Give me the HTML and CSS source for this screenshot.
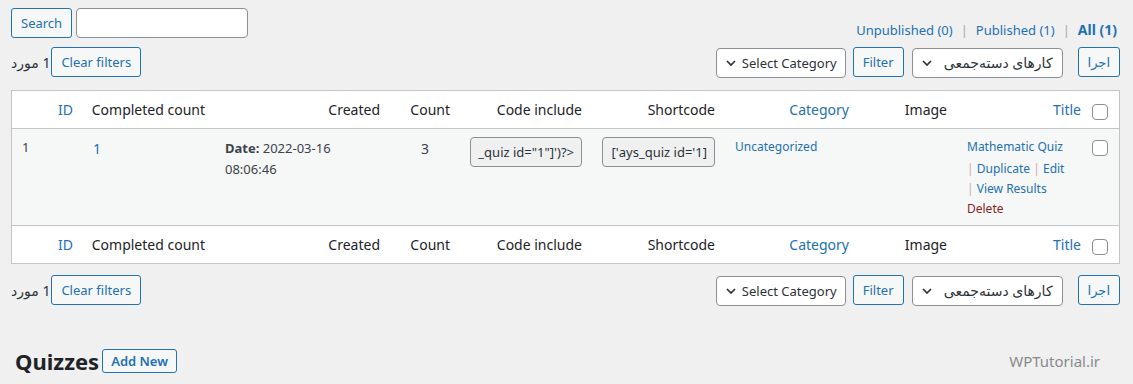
FILE: index.html
```
<!DOCTYPE html>
<html lang="fa" dir="rtl">
<head>
    <meta charset="UTF-8">
    <meta name="viewport" content="width=device-width, initial-scale=1.0">
    <title>Quizzes</title>
    <link rel="stylesheet" href="styles.css">
</head>
<body>

    <div class="wrap">
        <!-- Status links + search -->
        <div class="top-row">
            <ul class="subsubsub">
                <li><a href="#" class="current" dir="ltr">All (1)</a><span class="sep">|</span></li>
                <li><a href="#" dir="ltr">Published (1)</a><span class="sep">|</span></li>
                <li><a href="#" dir="ltr">Unpublished (0)</a></li>
            </ul>
            <div class="search-box">
                <input type="search" class="search-input">
                <button class="button">Search</button>
            </div>
        </div>

        <!-- Top table navigation -->
        <div class="tablenav">
            <div class="actions">
                <button class="button">اجرا</button>
                <div class="select select-bulk">
                    <span>کارهای دسته‌جمعی</span>
                    <svg class="chev" width="10" height="6" viewBox="0 0 10 6"><polyline points="1,1 5,5 9,1"/></svg>
                </div>
                <button class="button button-filter">Filter</button>
                <div class="select select-cat">
                    <span>Select Category</span>
                    <svg class="chev" width="10" height="6" viewBox="0 0 10 6"><polyline points="1,1 5,5 9,1"/></svg>
                </div>
            </div>
            <div class="pages">
                <button class="button">Clear filters</button>
                <span class="displaying-num">1 مورد</span>
            </div>
        </div>

        <table class="list-table">
            <colgroup>
                <col class="c-check">
                <col class="c-title">
                <col class="c-image">
                <col class="c-cat">
                <col class="c-short">
                <col class="c-code">
                <col class="c-count">
                <col class="c-created">
                <col class="c-completed">
                <col class="c-id">
            </colgroup>
            <thead>
                <tr>
                    <th class="check-column"><input type="checkbox"></th>
                    <th><a href="#">Title</a></th>
                    <th>Image</th>
                    <th><a href="#">Category</a></th>
                    <th>Shortcode</th>
                    <th>Code include</th>
                    <th>Count</th>
                    <th>Created</th>
                    <th>Completed count</th>
                    <th><a href="#">ID</a></th>
                </tr>
            </thead>
            <tbody>
                <tr>
                    <td class="check-column"><input type="checkbox"></td>
                    <td class="title-cell">
                        <a href="#" class="row-title">Mathematic Quiz</a>
                        <div class="row-actions">
                            <span class="ra"><a href="#">Edit</a> <i>|</i></span>
                            <span class="ra"><a href="#">Duplicate</a> <i>|</i></span>
                            <span class="ra"><a href="#">View Results</a> <i>|</i></span>
                            <span class="ra"><a href="#" class="delete">Delete</a></span>
                        </div>
                    </td>
                    <td></td>
                    <td class="small-link"><a href="#">Uncategorized</a></td>
                    <td><div class="code-box"><div class="code-inner">[ays_quiz id='1']</div></div></td>
                    <td><div class="code-box"><div class="code-inner"><bdi dir="ltr">_quiz id="1"]')?&gt;</bdi></div></div></td>
                    <td class="count">3</td>
                    <td class="created"><b>Date:</b> 2022-03-16<br>08:06:46</td>
                    <td class="completed"><a href="#">1</a></td>
                    <td class="id-cell">1</td>
                </tr>
            </tbody>
            <tfoot>
                <tr>
                    <th class="check-column"><input type="checkbox"></th>
                    <th><a href="#">Title</a></th>
                    <th>Image</th>
                    <th><a href="#">Category</a></th>
                    <th>Shortcode</th>
                    <th>Code include</th>
                    <th>Count</th>
                    <th>Created</th>
                    <th>Completed count</th>
                    <th><a href="#">ID</a></th>
                </tr>
            </tfoot>
        </table>

        <!-- Bottom table navigation -->
        <div class="tablenav tablenav-bottom">
            <div class="actions">
                <button class="button">اجرا</button>
                <div class="select select-bulk">
                    <span>کارهای دسته‌جمعی</span>
                    <svg class="chev" width="10" height="6" viewBox="0 0 10 6"><polyline points="1,1 5,5 9,1"/></svg>
                </div>
                <button class="button button-filter">Filter</button>
                <div class="select select-cat">
                    <span>Select Category</span>
                    <svg class="chev" width="10" height="6" viewBox="0 0 10 6"><polyline points="1,1 5,5 9,1"/></svg>
                </div>
            </div>
            <div class="pages">
                <button class="button">Clear filters</button>
                <span class="displaying-num">1 مورد</span>
            </div>
        </div>

        <!-- Page heading -->
        <div class="page-head" dir="ltr">
            <h1 class="page-title">Quizzes</h1>
            <a href="#" class="page-title-action">Add New</a>
            <span class="watermark">WPTutorial.ir</span>
        </div>
    </div>

</body>
</html>
```

FILE: styles.css
```
html, body {
    margin: 0;
    padding: 0;
    background: #f0f0f1;
}

body {
    font-family: "Noto Sans", "DejaVu Sans", sans-serif;
    font-size: 13px;
    color: #3c434a;
}

a {
    color: #2271b1;
    text-decoration: none;
}

.wrap {
    padding: 8px 13px 0 11px;
}

/* Top row: status links on the right, search on the left */
.top-row {
    display: flex;
    justify-content: space-between;
    align-items: flex-end;
    height: 30px;
}

.subsubsub {
    list-style: none;
    margin: 0 3px 0 0;
    padding: 0;
    display: flex;
    align-items: baseline;
    line-height: 16px;
}

.subsubsub .current {
    font-weight: 700;
    font-size: 14px;
}

.subsubsub .sep {
    color: #a7aaad;
    margin: 0 8px;
}

.search-box {
    display: flex;
    gap: 4px;
}

.search-input {
    width: 172px;
    height: 30px;
    box-sizing: border-box;
    border: 1px solid #8c8f94;
    border-radius: 4px;
    background: #fff;
    margin: 0;
}

.button {
    height: 30px;
    box-sizing: border-box;
    padding: 0 9px;
    border: 1px solid #2271b1;
    border-radius: 3px;
    background: #f6f7f7;
    color: #2271b1;
    font-family: inherit;
    font-size: 13px;
    line-height: 28px;
    margin: 0;
}

/* Table navigation */
.tablenav {
    margin-top: 9px;
    height: 30px;
    display: flex;
    justify-content: space-between;
    align-items: center;
}

.tablenav-bottom {
    margin-top: 11px;
}

.actions {
    display: flex;
    align-items: center;
    gap: 8px;
}

.actions .button:first-child {
    margin-left: 7px;
}

.button-filter {
    margin-left: -1px;
}

.select {
    height: 30px;
    box-sizing: border-box;
    border: 1px solid #8c8f94;
    border-radius: 4px;
    background: #fff;
    color: #2c3338;
    display: flex;
    justify-content: space-between;
    align-items: center;
    font-size: 13px;
    margin-top: 1px;
}

.select-cat {
    width: 130px;
    padding: 0 8px 0 9px;
}

.select-bulk {
    width: 151px;
    padding: 0 9px 0 9px;
    font-size: 14px;
}

.chev polyline {
    fill: none;
    stroke: #2c3338;
    stroke-width: 1.7;
}

.pages {
    display: flex;
    align-items: center;
    gap: 1px;
}

.displaying-num {
    font-size: 14px;
    color: #2c3338;
}

/* List table */
.list-table {
    margin-top: 13px;
    width: 100%;
    table-layout: fixed;
    border: 1px solid #c3c4c7;
    border-spacing: 0;
    background: #fff;
}

.c-check { width: 28px; }
.c-title { width: 134px; }
.c-image { width: 98px; }
.c-cat { width: 134px; }
.c-short { width: 133px; }
.c-code { width: 132px; }
.c-count { width: 70px; }
.c-created { width: 175px; }
.c-completed { width: 132px; }
.c-id { width: 71px; }

.list-table th {
    padding: 8px 10px;
    line-height: 21px;
    font-size: 14px;
    font-weight: 400;
    color: #1d2327;
    text-align: right;
    white-space: nowrap;
}

.list-table thead th {
    border-bottom: 1px solid #c3c4c7;
}

.list-table tfoot th {
    border-top: 1px solid #c3c4c7;
}

.list-table tbody tr {
    background: #f6f7f7;
}

.list-table td {
    padding: 8px 10px 6px;
    vertical-align: top;
    text-align: left;
    line-height: 19.5px;
    color: #3c434a;
}

.list-table .check-column {
    padding: 13px 11px 0 0;
    vertical-align: top;
    line-height: 0;
}

.list-table td.check-column {
    padding-top: 11px;
}

.check-column input {
    appearance: none;
    display: block;
    width: 16px;
    height: 16px;
    margin: 0;
    border: 1px solid #8c8f94;
    border-radius: 4px;
    background: #fff;
}

.title-cell {
    font-size: 12px;
}

.list-table td.title-cell {
    padding-top: 9px;
}

.row-title {
    display: block;
    line-height: 18px;
}

.row-actions {
    margin-top: 3px;
    line-height: 20px;
}

.ra {
    display: inline-block;
}

.ra i {
    font-style: normal;
    color: #d3a9a9;
}

.ra .delete {
    color: #8a2424;
}

.small-link {
    font-size: 12px;
}

.list-table td.small-link {
    line-height: 18px;
    padding-top: 9px;
}

.list-table td.id-cell {
    padding-top: 9px;
}

.code-box {
    height: 30px;
    box-sizing: border-box;
    border: 1px solid #8c8f94;
    border-radius: 4px;
    background: #f0f0f1;
    padding: 0 7px;
    color: #2c3338;
}

.code-inner {
    overflow: hidden;
    white-space: nowrap;
    text-align: right;
    line-height: 28px;
}

.count {
    font-size: 14px;
}

.list-table td.count {
    text-align: center;
    padding-top: 10px;
}

.list-table td.created {
    padding-top: 9px;
    line-height: 21px;
}

.created b {
    font-weight: 700;
}

.completed {
    font-size: 14px;
}

.list-table td.completed {
    padding-top: 10px;
}

/* Page heading */
.page-head {
    margin-top: 44px;
    height: 24px;
    display: flex;
    align-items: center;
    padding-left: 4px;
}

.page-title {
    margin: 0;
    font-size: 22px;
    font-weight: 700;
    line-height: 24px;
    color: #1d2327;
}

.page-title-action {
    margin-left: 3px;
    height: 24px;
    box-sizing: border-box;
    padding: 0 8px;
    border: 1px solid #2271b1;
    border-radius: 3px;
    background: #f6f7f7;
    font-size: 13px;
    font-weight: 600;
    line-height: 22px;
}

.watermark {
    margin-left: auto;
    margin-right: 20px;
    font-size: 15px;
    color: #8a8a8a;
}
```
